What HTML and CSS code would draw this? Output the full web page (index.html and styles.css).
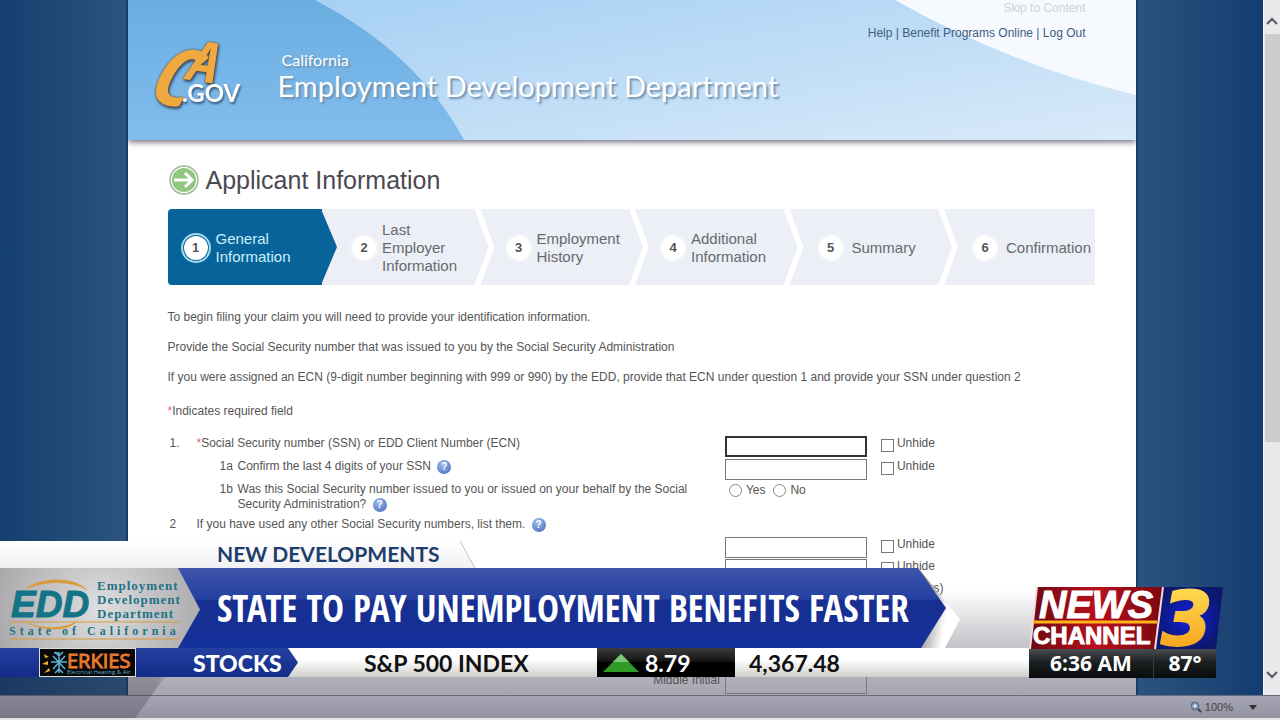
FILE: index.html
```html
<!DOCTYPE html>
<html lang="en">
<head>
    <meta charset="UTF-8">
    <meta name="viewport" content="width=device-width, initial-scale=1.0">
    <title>State to Pay Unemployment Benefits Faster</title>
    <link rel="stylesheet" href="styles.css">
</head>
<body>
    <!-- Browser window -->
    <div class="browser">
        <div class="viewport">
            <main class="page">
                <header class="site-header">
                    <svg class="header-art" viewBox="0 0 1008 140" preserveAspectRatio="none" aria-hidden="true">
                        <defs>
                            <linearGradient id="deep" x1="0" y1="0" x2="0" y2="1">
                                <stop offset="0" stop-color="#6aaee0"/>
                                <stop offset="1" stop-color="#82bcee"/>
                            </linearGradient>
                            <linearGradient id="light" x1="0" y1="0" x2="1" y2="1">
                                <stop offset="0" stop-color="#a6d0f4"/>
                                <stop offset="1" stop-color="#d9eaf9"/>
                            </linearGradient>
                        </defs>
                        <rect width="1008" height="140" fill="url(#deep)"/>
                        <path d="M187 0Q290 54 336 140H1008V0Z" fill="url(#light)"/>
                        <path d="M767 0Q880 64 1008 95V0Z" fill="#f6faff"/>
                    </svg>
                    <svg class="ca-logo" viewBox="0 0 100 76" role="img" aria-label="CA.GOV">
                        <g class="ca-letters">
                            <text x="3" y="65" font-size="84" transform="rotate(16 24 36)">C</text>
                            <text x="37" y="41" font-size="56" transform="rotate(8 50 24)">A</text>
                        </g>
                        <text class="ca-gov" x="34" y="62" font-size="24">.GOV</text>
                    </svg>
                    <div class="department">
                        <span class="department-state">California</span>
                        <span class="department-name">Employment Development Department</span>
                    </div>
                    <nav class="top-links">
                        <a class="skip" href="#content">Skip to Content</a>
                        <div><a href="#">Help</a> | <a href="#">Benefit Programs Online</a> | <a href="#">Log Out</a></div>
                    </nav>
                </header>

                <div class="content" id="content">
                    <h1>
                        <svg width="32" height="32" viewBox="0 0 32 32" aria-hidden="true">
                            <circle cx="16" cy="16" r="14" fill="#fff" stroke="#9fb89a" stroke-width="1.5"/>
                            <circle cx="16" cy="16" r="12" fill="#90c67e"/>
                            <path d="M6 16H24M17 9L24 16L17 23" fill="none" stroke="#fff" stroke-width="3"/>
                        </svg>
                        Applicant Information
                    </h1>

                    <ol class="steps">
                        <li class="current"><b>1</b><span>General Information</span></li>
                        <li><b>2</b><span>Last Employer Information</span></li>
                        <li><b>3</b><span>Employment History</span></li>
                        <li><b>4</b><span>Additional Information</span></li>
                        <li class="single"><b>5</b><span>Summary</span></li>
                        <li class="single"><b>6</b><span>Confirmation</span></li>
                    </ol>

                    <p>To begin filing your claim you will need to provide your identification information.</p>
                    <p>Provide the Social Security number that was issued to you by the Social Security Administration</p>
                    <p>If you were assigned an ECN (9-digit number beginning with 999 or 990) by the EDD, provide that ECN under question 1 and provide your SSN under question 2</p>
                    <p class="required-note"><i>*</i>Indicates required field</p>

                    <form>
                        <div class="row tall">
                            <span class="num">1.</span>
                            <label for="ssn"><i>*</i>Social Security number (SSN) or EDD Client Number (ECN)</label>
                            <input class="box active" type="text" id="ssn">
                            <label class="check"><input type="checkbox">Unhide</label>
                        </div>
                        <div class="row tall">
                            <span></span>
                            <div class="sub">
                                <span>1a</span>
                                <label for="last4">Confirm the last 4 digits of your SSN <button type="button" class="help">?</button></label>
                            </div>
                            <input class="box" type="text" id="last4">
                            <label class="check"><input type="checkbox">Unhide</label>
                        </div>
                        <div class="row double">
                            <span></span>
                            <div class="sub">
                                <span>1b</span>
                                <div>Was this Social Security number issued to you or issued on your behalf by the Social Security Administration? <button type="button" class="help">?</button></div>
                            </div>
                            <div class="radios">
                                <label><input type="radio" name="issued">Yes</label>
                                <label><input type="radio" name="issued">No</label>
                            </div>
                        </div>
                        <div class="row short">
                            <span class="num">2</span>
                            <div>If you have used any other Social Security numbers, list them. <button type="button" class="help">?</button></div>
                        </div>
                        <div class="row">
                            <input class="box third" type="text" aria-label="Other number">
                            <label class="check"><input type="checkbox">Unhide</label>
                        </div>
                        <div class="row">
                            <input class="box third" type="text" aria-label="Other number">
                            <label class="check"><input type="checkbox">Unhide</label>
                        </div>
                        <div class="row">
                            <span class="hint">marks)</span>
                        </div>
                        <div class="row last">
                            <span></span>
                            <label class="right" for="middle">Middle Initial</label>
                            <input class="box" type="text" id="middle">
                        </div>
                    </form>
                </div>
            </main>
        </div>
        <div class="scrollbar">
            <svg width="12" height="8" viewBox="0 0 12 8" aria-hidden="true"><path d="M1 7L6 2L11 7"/></svg>
            <div class="track"><div class="thumb"></div></div>
            <svg width="12" height="8" viewBox="0 0 12 8" aria-hidden="true"><path d="M1 1L6 6L11 1"/></svg>
        </div>
    </div>
    <div class="status-bar">
        <svg width="12" height="12" viewBox="0 0 12 12" aria-hidden="true">
            <circle cx="5" cy="5" r="4" fill="#7b8fb5" stroke="#5a6a88"/>
            <path d="M3 5H7M5 3V7" stroke="#fff"/>
            <path d="M8 8L11 11" stroke="#444" stroke-width="2"/>
        </svg>
        <span>100%</span>
        <svg width="8" height="5" viewBox="0 0 8 5" aria-hidden="true"><path d="M0 0H8L4 5Z" fill="#333"/></svg>
    </div>

    <!-- Lower third -->
    <div class="corner"></div>
    <section class="lower-third">
        <div class="topic">
            <span>NEW DEVELOPMENTS</span>
            <svg width="16" height="27" viewBox="0 0 16 27" aria-hidden="true"><path d="M0 0L15 27" stroke="#c4c4c8" fill="none"/></svg>
        </div>
        <div class="headline">
            <div class="headline-bar">
                <div class="edd">
                    <svg width="200" height="80" viewBox="0 0 200 80" role="img" aria-label="EDD">
                        <path d="M24 22C40 8 76 8 88 23C74 13 46 12 24 22Z" fill="#d89a3c"/>
                        <path d="M22 51C36 62 68 62 79 51C70 66 36 64 22 51Z" fill="#d89a3c"/>
                        <text class="edd-mark" x="11" y="49" font-size="37">EDD</text>
                        <g class="edd-text" font-size="13">
                            <text x="97" y="22">Employment</text>
                            <text x="97" y="36">Development</text>
                            <text x="97" y="50">Department</text>
                            <text class="edd-state" x="9" y="67" font-size="12">State of California</text>
                        </g>
                        <path d="M10 54H180M10 71H180" stroke="#d89a3c"/>
                    </svg>
                </div>
                <h2>STATE TO PAY UNEMPLOYMENT BENEFITS FASTER</h2>
            </div>
        </div>
        <div class="ticker">
            <div class="ticker-tag">
                <div class="sponsor">
                    <svg width="95" height="27" viewBox="0 0 95 27" role="img" aria-label="Erkies">
                        <path d="M4 5L9 8L5 9ZM2 15L8 12L8 16ZM4 24L9 19L10 22Z" fill="#f0b030"/>
                        <path d="M19 3V24M13 7L25 20M13 20L25 7M11 13H27M14 4H18M15 24L19 20L23 24M15 3L19 7L23 3" stroke="#58b4d4" stroke-width="1.5" fill="none"/>
                        <text x="27" y="19" font-size="20" fill="#e8792c" stroke="#e8792c">ERKIES</text>
                        <text x="27" y="25" font-size="6" fill="#5db0c8">Electrical Heating &amp; Air</text>
                    </svg>
                </div>
                <span>STOCKS</span>
            </div>
            <span class="index-name">S&amp;P 500 INDEX</span>
            <div class="change">
                <svg width="36" height="18" viewBox="0 0 36 18" aria-hidden="true">
                    <path d="M18 0L36 18H0Z" fill="#2f9a26"/>
                    <path d="M18 0L26 8H10Z" fill="#7cc878"/>
                </svg>
                <span>8.79</span>
            </div>
            <span class="index-value">4,367.48</span>
        </div>
    </section>

    <!-- Station bug -->
    <aside class="station">
        <svg width="194" height="62" viewBox="0 0 194 62" role="img" aria-label="News Channel 3">
            <defs>
                <linearGradient id="red" x1="0" y1="0" x2="1" y2="0">
                    <stop offset="0" stop-color="#6e0810"/>
                    <stop offset="0.5" stop-color="#b8101c"/>
                    <stop offset="1" stop-color="#7a0810"/>
                </linearGradient>
                <linearGradient id="gold" x1="0" y1="0" x2="0" y2="1">
                    <stop offset="0" stop-color="#ffe45a"/>
                    <stop offset="1" stop-color="#f49a14"/>
                </linearGradient>
                <radialGradient id="blue">
                    <stop offset="0" stop-color="#1020e0"/>
                    <stop offset="1" stop-color="#0c1870"/>
                </radialGradient>
            </defs>
            <path d="M8 0H134L126 62H1Z" fill="url(#red)"/>
            <path d="M134 0H194L187 62H126Z" fill="url(#blue)"/>
            <path d="M8 0L1 62M134 0L126 62" stroke="#f4d8d8" stroke-width="2"/>
            <path d="M4 35H128" stroke="#ffb41c" stroke-width="3"/>
            <text class="news" x="10" y="31" font-size="38">NEWS</text>
            <text class="channel" x="4" y="57" font-size="24">CHANNEL</text>
            <text class="three" x="132" y="58" font-size="74">3</text>
        </svg>
        <div class="readout"><span class="time">6:36 AM</span><span class="temp">87°</span></div>
    </aside>
</body>
</html>
```
FILE: styles.css
```css
* {
    box-sizing: border-box;
}

body {
    margin: 0;
    height: 100vh;
    display: flex;
    flex-direction: column;
    overflow: hidden;
    position: relative;
    font-family: "Liberation Sans", Arial, sans-serif;
    font-size: 12px;
    line-height: 15px;
    color: #555;
    background: #fff;
}

/* Browser */
.browser {
    flex: 1;
    min-height: 0;
    display: flex;
}

.viewport {
    flex: 1;
    overflow: hidden;
    background: linear-gradient(90deg, #153f70, #2e567e 11%, #2e567e 89%, #153c70);
}

.page {
    max-width: 1008px;
    height: 100%;
    margin: 0 auto;
    overflow: hidden;
    background: linear-gradient(0deg, #a6a6b2, #c4c4ca 50px, #fff 105px);
    box-shadow: 0 0 2px 1px #10245c;
}

.site-header {
    position: relative;
    display: flex;
    height: 140px;
    padding: 0 50px 0 20px;
    box-shadow: 0 2px 6px #6d6878;
}

.header-art {
    position: absolute;
    inset: 0;
    width: 100%;
    height: 100%;
}

.ca-logo {
    position: relative;
    width: 100px;
    height: 76px;
    margin-top: 40px;
    overflow: visible;
    filter: drop-shadow(1px 2px 1px #35557a);
}

.ca-letters {
    font-family: "Open Sans Condensed", Lato, sans-serif;
    font-style: italic;
    font-weight: 300;
    fill: #f0a840;
    filter: drop-shadow(0 0 1px #5f4520);
}

.ca-gov {
    font-family: Lato, sans-serif;
    font-weight: bold;
    fill: #fff;
}

.department {
    position: relative;
    display: flex;
    flex-direction: column;
    margin: 50px 0 0 30px;
    font-family: Lato, sans-serif;
    color: #fff;
    text-shadow: 2px 2px 2px #6f8fae;
}

.department-state {
    padding-left: 4px;
    font-size: 16px;
    line-height: 20px;
}

.department-name {
    font-size: 29px;
    line-height: 32px;
}

.top-links {
    position: relative;
    margin-left: auto;
    text-align: right;
    line-height: 16px;
    color: #3f5c80;
}

.top-links a {
    color: inherit;
    text-decoration: none;
}

.top-links .skip {
    display: block;
    margin-bottom: 9px;
    color: #cdd2dc;
}

.content {
    padding: 24px 41px 0 40px;
}

h1 {
    display: flex;
    align-items: center;
    gap: 6px;
    height: 32px;
    margin: 0 0 13px;
    font-size: 25px;
    font-weight: normal;
    color: #4c4850;
}

/* Steps */
.steps {
    display: grid;
    grid-template-columns: repeat(6, minmax(0, 1fr));
    height: 76px;
    margin: 0 0 25px;
    padding: 0;
    list-style: none;
    font-size: 15px;
    line-height: 18px;
    color: #666a70;
}

.steps li {
    position: relative;
    display: flex;
    align-items: center;
    gap: 6px;
    padding: 2px 0 0 30px;
    background: #eceff5;
}

.steps .single {
    gap: 9px;
    padding-left: 33px;
}

.steps b {
    flex: none;
    width: 24px;
    border-radius: 50%;
    background: #fff;
    box-shadow: 0 0 4px #fff;
    font-size: 13px;
    line-height: 24px;
    text-align: center;
    color: #555;
}

.steps li::after {
    content: "";
    position: absolute;
    z-index: 1;
    top: 0;
    right: -18px;
    width: 20px;
    height: 100%;
    background: #fff;
    clip-path: polygon(0 0, 30% 0, 100% 50%, 30% 100%, 0 100%, 70% 50%);
}

.steps li:last-child::after {
    display: none;
}

.steps .current {
    gap: 8px;
    padding-left: 16px;
    border-radius: 4px 0 0 4px;
    background: #08639a;
    color: #c9effb;
}

.steps .current::after {
    right: -15px;
    width: 16px;
    background: #08639a;
    clip-path: polygon(0 0, 100% 50%, 0 100%);
}

.steps .current b {
    outline: 2px solid #a5dcf0;
    outline-offset: 1px;
    box-shadow: none;
}

.content p {
    margin: 0 0 15px;
    white-space: nowrap;
}

.content .required-note {
    margin: 19px 0 17px;
}

i {
    color: #d8686c;
    font-style: normal;
}

/* Form */
.row {
    display: grid;
    grid-template-columns: 29px 57% 156px 1fr;
    height: 22px;
}

.tall {
    height: 23px;
}

.double {
    height: 35px;
}

.short {
    height: 20px;
}

.last {
    margin-top: 70px;
}

.num {
    padding-left: 2px;
}

.sub {
    display: grid;
    grid-template-columns: 18px 476px;
    padding-left: 23px;
}

.box {
    width: 142px;
    height: 21px;
    padding: 0 4px;
    border: 1px solid #77777d;
    background: transparent;
}

.active {
    border: 2px solid #333;
}

.third {
    grid-column: 3;
}

.hint {
    grid-column: 4;
    padding-left: 26px;
}

.right {
    padding-right: 5px;
    text-align: right;
}

.check {
    display: flex;
    align-items: flex-start;
    gap: 3px;
}

.check input {
    appearance: none;
    width: 13px;
    height: 13px;
    margin: 3px 0 0;
    border: 1px solid #77777d;
}

.radios {
    display: flex;
    gap: 8px;
    padding: 1px 0 0 4px;
}

.radios label {
    display: flex;
    gap: 4px;
    height: 15px;
}

.radios input {
    appearance: none;
    width: 13px;
    height: 13px;
    margin: 1px 0 0;
    border: 1px solid #88888d;
    border-radius: 50%;
}

.help {
    width: 14px;
    height: 14px;
    margin: 0 0 0 3px;
    padding: 0;
    border: 0;
    border-radius: 50%;
    background: radial-gradient(circle at 40% 30%, #9cbcf0, #4565ba);
    color: #fff;
    font: bold 10px/14px "Liberation Sans", Arial, sans-serif;
}

/* Window chrome */
.scrollbar {
    width: 17px;
    display: flex;
    flex-direction: column;
    align-items: center;
    padding: 17px 0 16px;
    border-left: 1px solid #f8f8fb;
    background: #e9e9ec;
}

.scrollbar path {
    fill: none;
    stroke: #55555a;
    stroke-width: 2;
}

.track {
    flex: 1;
    width: 15px;
    margin: 9px 0;
}

.thumb {
    height: 65%;
    background: #cdcdd0;
}

.status-bar {
    display: flex;
    align-items: center;
    justify-content: flex-end;
    height: 25px;
    padding-right: 23px;
    border-top: 1px solid #696b7a;
    border-bottom: 2px solid #e3e3e8;
    background: linear-gradient(#a6a6b4, #9292a2);
    font-size: 11px;
    color: #444;
}

.status-bar span {
    margin: 0 16px 0 3px;
}

/* Lower third */
.corner {
    position: absolute;
    left: 0;
    bottom: 2px;
    width: 165px;
    height: 41px;
    background: linear-gradient(110deg, rgba(40, 40, 55, 0.25) 88%, rgba(255, 255, 255, 0.3));
    clip-path: polygon(0 0, 100% 0, 82% 100%, 0 100%);
}

.lower-third {
    position: absolute;
    left: 0;
    right: 251px;
    bottom: 43px;
    font-family: Lato, sans-serif;
}

.topic {
    display: flex;
    justify-content: space-between;
    width: 476px;
    height: 27px;
    padding-left: 217px;
    background: linear-gradient(#fff, #f1f1f3);
    clip-path: polygon(0 0, 461px 0, 100% 100%, 0 100%);
    color: #1f3d6c;
    font-size: 21px;
    font-weight: bold;
    line-height: 26px;
    white-space: nowrap;
}

.headline {
    width: 960px;
    height: 80px;
    background: linear-gradient(100deg, #777 95%, #fff 98%);
    clip-path: polygon(0 0, 918px 0, 100% 64%, 945px 100%, 0 100%);
}

.headline-bar {
    display: flex;
    align-items: center;
    width: 946px;
    height: 80px;
    background: linear-gradient(#3e54ac, #2440a0 39%, #172f90 40%, #14309a);
    clip-path: polygon(0 0, 918px 0, 100% 50%, 921px 100%, 0 100%);
}

.edd {
    width: 200px;
    height: 80px;
    background: radial-gradient(circle at 50% 50%, #dededf, #a9a9ac);
    clip-path: polygon(0 0, 178px 0, 100% 52%, 178px 100%, 0 100%);
}

.edd-mark {
    font-family: "Liberation Sans", Arial, sans-serif;
    font-weight: bold;
    font-style: italic;
    fill: #137487;
    stroke: #137487;
}

.edd-text {
    font-family: "Liberation Serif", serif;
    font-weight: bold;
    letter-spacing: 1px;
    fill: #217385;
}

.edd-state {
    letter-spacing: 4px;
}

h2 {
    margin: 0 0 0 17px;
    color: #fff;
    font-family: "Open Sans Condensed", "Liberation Sans Narrow", Lato, sans-serif;
    font-size: 37px;
    font-weight: bold;
    line-height: 40px;
    white-space: nowrap;
}

.ticker {
    display: flex;
    height: 29px;
    background: linear-gradient(#fff 40%, #cfcfcd);
    color: #111;
    font-size: 23px;
    font-weight: bold;
    line-height: 30px;
    white-space: nowrap;
}

.ticker-tag {
    display: flex;
    width: 298px;
    padding-left: 39px;
    background: linear-gradient(#2440a0, #142c88);
    clip-path: polygon(0 0, 288px 0, 100% 50%, 288px 100%, 0 100%);
    color: #fff;
    font-weight: 900;
}

.sponsor {
    width: 97px;
    height: 29px;
    margin-right: 57px;
    border: 1px solid #ddd;
    background: #08080a;
    font-family: "Open Sans", sans-serif;
    font-weight: normal;
}

.sponsor svg {
    display: block;
    overflow: visible;
}

.index-name {
    width: 299px;
    padding-left: 66px;
}

.change {
    display: flex;
    align-items: center;
    gap: 6px;
    width: 138px;
    padding-left: 6px;
    background: linear-gradient(#3c3c3e, #151515 45%, #000 50%);
    color: #fff;
}

.index-value {
    padding-left: 14px;
}

/* Station bug */
.station {
    position: absolute;
    right: 57px;
    bottom: 42px;
    width: 194px;
}

.station svg {
    display: block;
    overflow: visible;
}

.station text {
    font-family: "Liberation Sans", Arial, sans-serif;
    font-weight: bold;
    fill: #fff;
}

.station .news {
    font-style: italic;
    stroke: #fff;
}

.station .channel {
    stroke: #fff;
}

.station .three {
    font-family: "DejaVu Sans", sans-serif;
    font-style: italic;
    fill: url(#gold);
    stroke: url(#gold);
    stroke-width: 2px;
}

.readout {
    display: flex;
    width: 187px;
    height: 29px;
    background: linear-gradient(#4a4e50, #1c2022 45%, #0a0c0c);
    color: #fff;
    font: bold 21px/28px "Open Sans", sans-serif;
    text-align: center;
}

.time {
    flex: 2;
    border-right: 1px solid #3a3d3f;
}

.temp {
    flex: 1;
}
```
